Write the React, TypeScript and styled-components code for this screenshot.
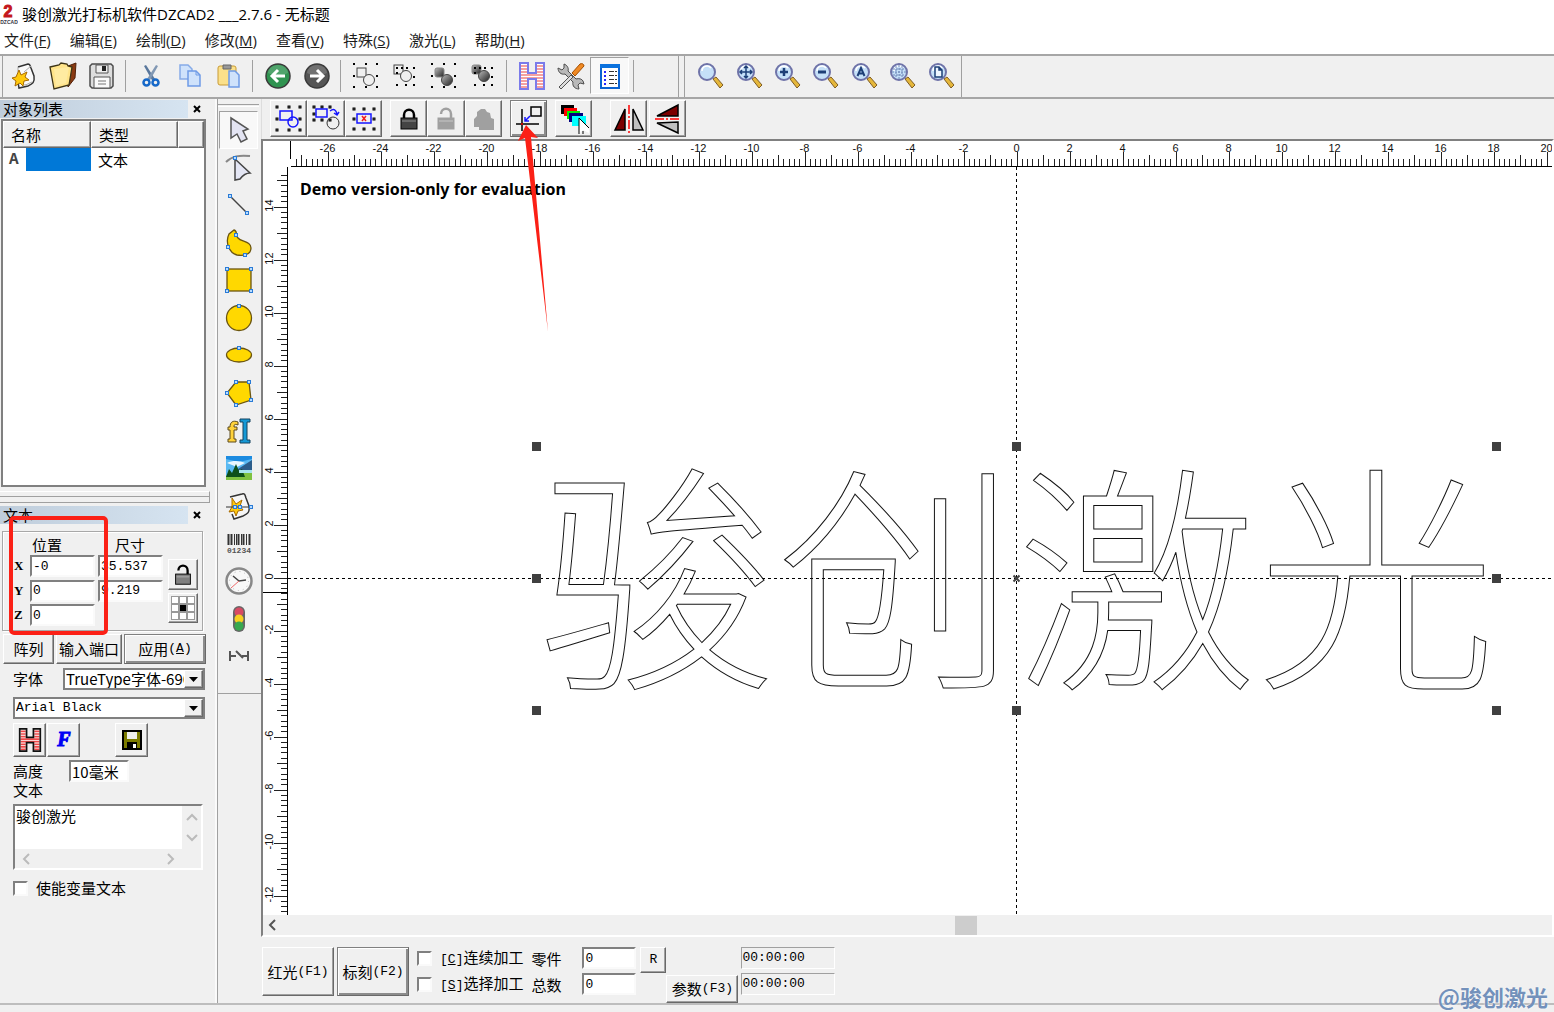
import React, { useEffect, useState } from "react";
import styled, { createGlobalStyle, css } from "styled-components";

const SANS = `"Open Sans", "Noto Sans CJK SC", sans-serif`;
const SONG = `"Noto Sans CJK SC", sans-serif`;
const MONO = `"Liberation Mono", "Noto Sans CJK SC", monospace`;

const Global = createGlobalStyle`
  *, *::before, *::after { box-sizing: border-box; }
  html, body, #root { height: 100%; }
  body { margin: 0; background: #f0f0f0; color: #000; font-family: ${SONG}; font-size: 15px; line-height: 20px; overflow: hidden; }
  button, input, select, textarea { font: inherit; color: inherit; margin: 0; padding: 0; border-radius: 0; }
  svg { display: block; flex: none; }
`;

const raised = css`
  background: #f0f0f0;
  border: 1px solid;
  border-color: #fff #696969 #696969 #fff;
  box-shadow: inset -1px -1px 0 #a0a0a0;
`;
const sunken = css`
  background: #fff;
  border: 2px solid;
  border-color: #808080 #fafafa #fafafa #808080;
`;

/* ---------- frame ---------- */
const Window = styled.div`
  position: relative;
  display: flex;
  flex-direction: column;
  height: 100%;
  background: #f0f0f0;
`;
const TitleBar = styled.header`
  display: flex;
  align-items: center;
  gap: 4px;
  height: 30px;
  background: #fff;
`;
const AppTitle = styled.h1`
  margin: 0;
  padding-bottom: 2px;
  font: 15px/28px ${SANS};
  white-space: pre;
`;
const MenuBar = styled.nav`
  display: flex;
  align-items: flex-start;
  gap: 19px;
  height: 24px;
  padding-left: 4px;
  background: #fff;
`;
const MenuItem = styled.button`
  height: 20px;
  border: 0;
  background: none;
  font: 15px/20px ${SANS};
  color: #1c1c1c;
  white-space: nowrap;
`;
const MainToolbar = styled.div`
  display: flex;
  height: 45px;
  border-top: 2px solid #a6a6a6;
  border-bottom: 2px solid #a6a6a6;
  background: #f0f0f0;
`;
const ToolGroup = styled.div<{ $width: number; $before: number; $pad: number }>`
  display: flex;
  align-items: center;
  width: ${(p) => p.$width}px;
  margin-left: ${(p) => p.$before}px;
  padding: 0 0 2px ${(p) => p.$pad}px;
  border-left: 1px solid #a0a0a0;
  border-right: 1px solid #a0a0a0;
`;
const FlatButton = styled.button<{ $pressed?: boolean }>`
  display: flex;
  align-items: center;
  justify-content: center;
  width: 39px;
  height: 37px;
  border: 1px solid transparent;
  background: none;
  ${(p) => p.$pressed && css`border-color: #a0a0a0 #fff #fff #a0a0a0; background: #f8f8f8;`}
`;
const Separator = styled.span`
  width: 1px;
  height: 32px;
  margin: 0 5px 0 4px;
  background: #a0a0a0;
`;
const Body = styled.div`
  display: flex;
  flex: 1;
  min-height: 0;
  border-bottom: 2px solid #bdbdbd;
`;
const StatusStrip = styled.div`
  height: 7px;
`;

/* ---------- left dock ---------- */
const Dock = styled.aside`
  display: flex;
  flex-direction: column;
  width: 217px;
  flex: none;
  border-right: 2px solid #fafafa;
`;
const Caption = styled.div`
  display: flex;
  align-items: center;
  height: 19px;
  padding-right: 9px;
`;
const CaptionTitle = styled.h2`
  flex: 1;
  height: 18px;
  margin: 0;
  padding-left: 3px;
  background: linear-gradient(90deg, #bfcddb, #d6e4f1);
  font: 15px/18px ${SONG};
`;
const CloseButton = styled.button`
  display: flex;
  align-items: center;
  justify-content: center;
  width: 18px;
  height: 18px;
  border: 0;
  background: none;
`;
const ListFrame = styled.div`
  height: 368px;
  margin: 1px 9px 0 1px;
  background: #fff;
  border: 2px solid #808080;
`;
const ObjectTable = styled.table`
  width: 100%;
  border-collapse: separate;
  border-spacing: 0;
  table-layout: fixed;
`;
const HeadCell = styled.th<{ $w?: number }>`
  ${raised}
  width: ${(p) => (p.$w ? `${p.$w}px` : "auto")};
  height: 27px;
  padding: 0 0 0 7px;
  font-weight: 400;
  text-align: left;
`;
const NameCell = styled.td`
  height: 23px;
  padding: 0;
`;
const NameInner = styled.div`
  display: flex;
  height: 23px;
  line-height: 20px;
  color: #444;
`;
const Glyph = styled.span`
  width: 23px;
  padding-left: 6px;
  font-weight: 700;
`;
const Selected = styled.span`
  flex: 1;
  background: #0078d7;
`;
const TypeCell = styled.td`
  padding: 0 0 0 7px;
`;
const Splitter = styled.div`
  height: 12px;
  margin: 4px 5px 2px 0;
  border-top: 1px solid #fff;
  border-right: 1px solid #a0a0a0;
`;
const SplitLine = styled.div`
  height: 7px;
  margin-top: 4px;
  border-top: 1px solid #a0a0a0;
  border-bottom: 1px solid #a0a0a0;
`;
const PropertyForm = styled.form`
  display: flex;
  flex-direction: column;
`;
const GeometryBox = styled.fieldset`
  display: grid;
  grid-template-columns: 13px 65px 65px 30px;
  grid-template-rows: 21px 24px 25px 24px;
  column-gap: 3px;
  align-items: center;
  height: 100px;
  margin: 7px 12px 0 2px;
  padding: 1px 0 0 11px;
  border: 1px solid #a8a8a8;
  box-shadow: inset 1px 1px 0 #fff, 1px 1px 0 #fff;
`;
const GeometryTitles = styled.div`
  grid-column: 1 / -1;
  display: flex;
  gap: 53px;
  padding: 2px 0 0 18px;
`;
const AxisLabel = styled.label`
  grid-column: 1;
  font: 700 13px/20px "Liberation Serif", serif;
`;
const Field = styled.input<{ $w?: number }>`
  ${sunken}
  width: ${(p) => (p.$w ? `${p.$w}px` : "100%")};
  height: 22px;
  padding-left: 1px;
  font: 13px/18px ${MONO};
`;
const HeightField = styled(Field)`
  margin-left: 26px;
  font: 15px/18px ${SONG};
`;
const SideButtons = styled.div`
  grid-column: 4;
  grid-row: 2 / 5;
  align-self: start;
  display: flex;
  flex-direction: column;
  gap: 3px;
  padding: 5px 0 0 2px;
`;
const RaisedButton = styled.button<{ $w: number; $h: number; $strong?: boolean }>`
  ${raised}
  display: flex;
  align-items: center;
  justify-content: center;
  width: ${(p) => p.$w}px;
  height: ${(p) => p.$h}px;
  flex: none;
  white-space: nowrap;
  ${(p) => p.$strong && css`border-color: #808080 #696969 #696969 #808080; box-shadow: inset 1px 1px 0 #fff, inset -2px -2px 0 #8c8c8c;`}
`;
const Half = styled.span`
  font: 13px/20px ${MONO};
`;
const Row = styled.div<{ $gap?: number; $top?: number; $left?: number }>`
  display: flex;
  align-items: center;
  gap: ${(p) => p.$gap ?? 0}px;
  margin-top: ${(p) => p.$top ?? 0}px;
  padding-left: ${(p) => p.$left ?? 13}px;
`;
const SelectBox = styled.div<{ $w: number }>`
  position: relative;
  width: ${(p) => p.$w}px;
  height: 22px;
  background: #fff;
  border: 2px solid #808080;
`;
const Select = styled.select<{ $mono?: boolean }>`
  display: block;
  appearance: none;
  width: 100%;
  height: 18px;
  padding: 0 19px 0 1px;
  border: 0;
  background: #fff;
  font: ${(p) => (p.$mono ? `13px/18px "Liberation Mono", monospace` : `15px/18px ${SONG}`)};
`;
const DropArrow = styled.span`
  ${raised}
  position: absolute;
  top: 0;
  right: 0;
  display: flex;
  align-items: center;
  justify-content: center;
  width: 19px;
  height: 18px;
  pointer-events: none;
`;
const Spacer = styled.span`
  width: 33px;
`;
const EditorFrame = styled.div`
  display: grid;
  grid-template: 43px 19px / 167px 20px;
  width: 190px;
  height: 66px;
  margin: 4px 0 0 13px;
  border: 2px solid;
  border-color: #808080 #fff #fff #808080;
`;
const Editor = styled.textarea`
  border: 0;
  padding: 0 0 0 1px;
  resize: none;
  outline: 0;
  overflow: hidden;
  background: #fff;
  font: 15px/20px ${SONG};
`;
const ScrollEnds = styled.div<{ $vertical?: boolean }>`
  display: flex;
  flex-direction: ${(p) => (p.$vertical ? "column" : "row")};
  justify-content: space-between;
  align-items: center;
  padding: ${(p) => (p.$vertical ? "5px 0" : "0 5px")};
`;
const BareButton = styled.button`
  display: flex;
  border: 0;
  background: none;
`;
const CheckLabel = styled.label`
  display: flex;
  align-items: center;
  gap: 8px;
  height: 22px;
  white-space: nowrap;
`;
const Check = styled.input`
  ${sunken}
  appearance: none;
  width: 15px;
  height: 15px;
  flex: none;
  &:checked { background: #333; }
`;

/* ---------- drawing tools ---------- */
const Palette = styled.div`
  display: flex;
  flex-direction: column;
  width: 44px;
  flex: none;
  border-left: 1px solid #a0a0a0;
`;
const PaletteTools = styled.div`
  display: flex;
  flex-direction: column;
  align-items: center;
  height: 595px;
  padding: 12px 2px 18px 0;
  border-bottom: 1px solid #a0a0a0;
`;
const Grip = styled.div`
  flex: none;
  width: 100%;
  height: 3px;
  border-top: 1px solid #a0a0a0;
  border-bottom: 1px solid #fff;
  margin: -7px 0 4px;
`;
const PaletteButton = styled(FlatButton)`
  flex: 1;
  height: auto;
`;

/* ---------- work area ---------- */
const Work = styled.main`
  display: flex;
  flex: 1;
  flex-direction: column;
  min-width: 0;
`;
const ObjectToolbar = styled.div`
  display: flex;
  gap: 8px;
  height: 40px;
  padding: 1px 0 0 8px;
  border-left: 1px solid #ddd;
`;
const ButtonRun = styled.div<{ $lead?: number; $gap?: number }>`
  display: flex;
  gap: ${(p) => p.$gap ?? 0}px;
  margin-left: ${(p) => p.$lead ?? 0}px;
`;
const CanvasFrame = styled.div`
  display: grid;
  grid-template: 26px 1fr 20px / 25px 1fr;
  flex: 1;
  min-height: 0;
  border: 2px solid;
  border-color: #808080 #fff #fff #808080;
  background: #fff;
`;
const Plane = styled.svg<{ $span?: number }>`
  grid-column: span ${(p) => p.$span ?? 1};
  width: 100%;
  height: 100%;
  min-width: 0;
  min-height: 0;
  overflow: hidden;
`;
const HScroll = styled.div`
  grid-column: 1 / 3;
  display: flex;
  align-items: center;
  padding-left: 4px;
  background: #f0f0f0;
`;
const Track = styled.div`
  flex: 1;
  height: 19px;
  padding-left: calc(53% - 5px);
`;
const Thumb = styled.div`
  width: 22px;
  height: 19px;
  background: #cdcdcd;
`;
const MarkPanel = styled.div`
  display: flex;
  height: 66px;
  padding: 10px 0 0 1px;
`;
const Column = styled.div<{ $left: number; $top?: number }>`
  display: flex;
  flex-direction: column;
  gap: 4px;
  margin-left: ${(p) => p.$left}px;
  padding-top: ${(p) => p.$top ?? 0}px;
`;
const Caps = styled.label`
  height: 22px;
  line-height: 24px;
`;
const TimeBox = styled.output`
  width: 94px;
  height: 22px;
  border: 1px solid;
  border-color: #a0a0a0 #fff #fff #a0a0a0;
  font: 13px/20px ${MONO};
`;

/* ---------- overlays ---------- */
const HighlightBox = styled.div`
  position: absolute;
  left: 9px;
  top: 516px;
  width: 99px;
  height: 119px;
  border: 4px solid #fb2016;
  border-radius: 5px;
  pointer-events: none;
`;
const ArrowMark = styled.svg`
  position: absolute;
  left: 514px;
  top: 122px;
  pointer-events: none;
`;
const Watermark = styled.div`
  position: absolute;
  right: 6px;
  bottom: 2px;
  color: #7391bb;
  font: 700 22px/28px ${SONG};
  text-shadow: 0 0 2px #fff;
`;

/* ---------- icons ---------- */
type IcoProps = { s?: number; children: React.ReactNode };
const Ico = ({ s = 28, children }: IcoProps) => (
  <svg width={s} height={s} viewBox={`0 0 ${s} ${s}`} fill="none" aria-hidden="true">{children}</svg>
);

const NewIcon = () => (
  <Ico>
    <path d="M8 5l10-3c2 0 2 1 3 4l3 8c1 7-2 8-6 10l-9 2-1-6" fill="#fafafa" stroke="#333" strokeWidth="1.500" />
    <path d="M8 5v5M14 10l7-6M14 23c3 0 5-2 8-3" stroke="#aaa" />
    <path d="M9 8l2 5 6-3-2 5 4 3-5 1-1 5-3-3-5 3 1-5-4-3 4-1z" fill="#ffc90e" stroke="#a86a00" />
  </Ico>
);
const FolderIcon = () => (
  <Ico><path d="M19 4l8-3-1 15-7 9z" fill="#8a3a12" stroke="#512008" /><path d="M1 5l9-2 2-2 6 1 1 2 4 1-3 18-15 4z" fill="#ffe48a" stroke="#3d3416" strokeWidth="1.300" /><path d="M5 7l15-2-3 16-10 3z" fill="#fff0b0" opacity=".6" /></Ico>
);
const DiskIcon = () => (
  <Ico><path d="M4 2h19l2 2v20l-2 2H4l-2-2V4z" fill="#dedede" stroke="#4c4c4c" strokeWidth="1.500" /><path d="M8 3h12v8H8z" fill="#eee" stroke="#555" /><path d="M14 4h4v5h-4z" fill="#222" /><path d="M6 15h16v11H6z" fill="#fafafa" stroke="#555" /><path d="M10 19h8M10 22h8" stroke="#777" /></Ico>
);
const CutIcon = () => (
  <Ico><path d="M7 4l2-1 9 14-2 3z" fill="#59779c" /><path d="M21 4l-2-1-9 14 2 3z" fill="#8198b4" /><circle cx="9.500" cy="20.500" r="3" stroke="#1769c9" strokeWidth="2.500" /><circle cx="18.500" cy="20.500" r="3" stroke="#1769c9" strokeWidth="2.500" /></Ico>
);
const CopyIcon = () => (
  <Ico><path d="M4 3h8l4 4v10H4z" fill="#cfe2fb" stroke="#86abe8" strokeWidth="1.500" /><path d="M12 9h8l4 4v11H12z" fill="#cfe2fb" stroke="#6f9be6" strokeWidth="1.500" /><path d="M20 9v4h4" stroke="#6f9be6" /></Ico>
);
const PasteIcon = () => (
  <Ico><rect x="3" y="4" width="18" height="19" rx="2" fill="#fbe08a" stroke="#c89b36" /><path d="M8 3h8v4H8z" fill="#999" stroke="#666" /><path d="M14 9h6l4 4v12H14z" fill="#cfe2fb" stroke="#6f9be6" strokeWidth="1.500" /></Ico>
);
const RoundArrow = ({ fill, flip }: { fill: string; flip?: boolean }) => (
  <Ico><circle cx="14" cy="14" r="12" fill={fill} stroke="#3a3a3a" strokeWidth="1.500" /><path d="M4 11a10 8 0 0 1 20 0c-6 3-14 3-20 0z" fill="#fff" opacity=".16" /><path d={flip ? "M7 14h13M14 8l6 6-6 6" : "M21 14H8M14 8l-6 6 6 6"} stroke="#fff" strokeWidth="3" /></Ico>
);
const dots = (pts: number[][], size = 3, hollow = false) =>
  pts.map(([x, y], i) => <rect key={i} x={x} y={y} width={size} height={size} fill={hollow ? "#777" : "#000"} stroke={hollow ? "#000" : "none"} />);
const ring8 = (a: number, b: number, c: number) => [[a, a], [b, a], [c, a], [a, b], [c, b], [a, c], [b, c], [c, c]];
const GroupIcon = ({ dark, tight }: { dark?: boolean; tight?: boolean }) => (
  <Ico>
    {dark && <defs><linearGradient id="orb" x2="1" y2="1"><stop stopColor="#bbb" /><stop offset="1" stopColor="#222" /></linearGradient></defs>}
    <rect x={tight ? 3 : 5} y={tight ? 3 : 6} width="9" height="9" rx={dark ? 2 : 0} fill={dark ? "url(#orb)" : "none"} stroke={dark ? "#888" : "#444"} />
    <circle cx={tight ? 15 : 17} cy={tight ? 14 : 18} r="5.500" fill={dark ? "url(#orb)" : "#f0f0f0"} stroke="#444" />
    {tight ? dots([[5, 5], [10, 5], [5, 10], [22, 5], [22, 14], [5, 22], [14, 22], [22, 22], [15, 5]], 2) : dots(ring8(1, 13, 24), 2)}
  </Ico>
);
const HatchIcon = ({ s = 28, edge = "#7b7bea", fill = "#f5a0a0" }: { s?: number; edge?: string; fill?: string }) => (
  <svg width={s} height={s} viewBox="0 0 28 28" fill="none"><path d="M2 1h8v10h8V1h8v26h-8V17h-8v10H2z" fill="#fff" /><path d="M3 4h6M3 7h6M3 10h6M3 13h22M3 16h22M3 19h6M3 22h6M3 25h6M19 4h6M19 7h6M19 10h6M19 19h6M19 22h6M19 25h6" stroke={fill} strokeWidth="2" /><path d="M2 1h8v10h8V1h8v26h-8V17h-8v10H2z" stroke={edge} strokeWidth="2" /></svg>
);
const ToolsIcon = () => (
  <Ico>
    <path d="M7 2c3 1 5 4 4 7l8 8c3-1 6 0 7 2l1 3-4-1-2 2 1 4c-4 0-7-3-6-7l-8-8C4 13 1 10 1 6l4 2 2-2z" fill="#b9b9b9" stroke="#4d4d4d" />
    <path d="M2 25l12-12 2 2L4 27z" fill="#ddd" stroke="#555" />
    <path d="M15 11l8-9c2-1 4 0 4 2l-9 10z" fill="#f08a24" stroke="#a34e00" />
  </Ico>
);
const ListIcon = () => (
  <Ico><rect x="5" y="3" width="18" height="23" fill="#fff" stroke="#0b63d1" strokeWidth="2" /><path d="M4 2h20v4H4z" fill="#0b72de" /><path d="M8 10h3M8 14h3M8 18h3M8 22h3" stroke="#2626ff" strokeWidth="2" strokeDasharray="2 1" /><path d="M13 9.500h8M13 13.500h8M13 17.500h8M13 21.500h8" stroke="#333" strokeDasharray="5 1" /></Ico>
);
const Mag = ({ children }: { children?: React.ReactNode }) => (
  <Ico><path d="M16 17l3-2 7 8-3 3z" fill="#e5b73a" stroke="#7e5c24" /><circle cx="10" cy="10" r="8" fill="#c5e0f8" stroke="#6f73a8" strokeWidth="2" /><path d="M5 9a5 5 0 0 1 9-3" stroke="#fff" strokeWidth="1.500" /><g stroke="#1d3f77" strokeWidth="2">{children}</g></Ico>
);
const Padlock = ({ fill = "#444", edge = "#000", open, s = 26, multi }: { fill?: string; edge?: string; open?: boolean; s?: number; multi?: boolean }) => (
  <svg width={s} height={s} viewBox="0 0 26 26" fill="none">
    {multi ? <path d="M3 13l3-3V6l4-3h4l2 3 3 1 1 5 3 1v11H8v-3H3z" fill="#a0a0a0" /> : <>
      <path d={open ? "M8 8c0-7 10-7 10 0v5" : "M8 13V9c0-7 10-7 10 0v4"} stroke={edge} strokeWidth="2.500" />
      <rect x="5" y="12" width="16" height="11" fill={fill} stroke={edge} /><path d="M6 15h14" stroke="#fff" opacity=".4" /></>}
  </svg>
);

const Nd = ({ p }: { p: number[][] }) => <>{p.map(([x, y], i) => <rect key={i} x={x - 1.5} y={y - 1.5} width="3" height="3" fill="#b8dcff" stroke="#2a7bd6" />)}</>;
const CursorIcon = () => (<Ico><path d="M6 2l17 11-5 2 4 8-6 3-4-8-6 4z" fill="#e3e4f2" stroke="#555" strokeWidth="1.500" /></Ico>);
const NodeIcon = () => (<Ico><path d="M1 9C7 3 14 2 25 3" stroke="#888" strokeWidth="2" /><path d="M10 6l15 14c-4 0-7 2-10 6l-5 1z" fill="#e4e6f4" stroke="#444" strokeWidth="1.500" /><Nd p={[[10, 5]]} /></Ico>);
const LineIcon = () => (<Ico><path d="M6 6l16 16" stroke="#444" strokeWidth="1.500" /><Nd p={[[5, 5], [22, 22]]} /></Ico>);
const gold = { fill: "#ffd800", stroke: "#6b5510", strokeWidth: 1.3 };
const BlobIcon = () => (<Ico><path d="M9 1c4 1 1 5 4 8 3 4 13 3 13 10 0 7-8 8-14 7C4 24 0 13 4 5z" {...gold} /><Nd p={[[11, 6], [3, 18], [20, 26]]} /></Ico>);
const RectIcon = () => (<Ico><rect x="2" y="3" width="24" height="22" {...gold} /><Nd p={[[2, 3], [26, 3], [2, 25], [26, 25]]} /></Ico>);
const CircleIcon = () => (<Ico><circle cx="14" cy="14" r="12.500" {...gold} /><Nd p={[[14, 2]]} /></Ico>);
const EllipseIcon = () => (<Ico><ellipse cx="14" cy="14" rx="12.500" ry="7" {...gold} /><Nd p={[[14, 7]]} /></Ico>);
const PolyIcon = () => (<Ico><path d="M11 3h13l2 18-15 5L2 14z" {...gold} /><Nd p={[[11, 3], [24, 3], [26, 21], [11, 26], [2, 14]]} /></Ico>);
const TextIcon = () => (<Ico><path d="M13 5c-5-2-8 0-8 5H3v3h2v9H3v3h8v-3H9v-9h3v-3H9c0-3 1-3 4-2z" fill="#ffd23a" stroke="#5d4b1c" /><path d="M15 2h10v3h-3v18h3v3H15v-3h3V5h-3z" fill="#1599d6" stroke="#15435f" /></Ico>);
const PictureIcon = () => (<Ico><path d="M1 2h26v24H1z" fill="#59b9f2" /><path d="M1 2h26v3L14 8 1 5z" fill="#1c8be0" /><path d="M2 9c6-3 14-2 18 0l-8 4z" fill="#e9f7ff" /><path d="M13 15L27 6v12H13z" fill="#2c5d8a" /><path d="M1 22l14-5 12 1v8H1z" fill="#7fc241" /><path d="M1 23l3-8 3 4 4-9 3 7 3-2 3 8z" fill="#0d4f1a" /><path d="M14 16h13v3H14z" fill="#a7e4ee" /></Ico>);
const VectorIcon = () => (<Ico><path d="M5 5l12-3c3-1 3 1 4 4l3 8c1 7-2 8-6 10l-9 3-2-5" fill="#f6f6f6" stroke="#333" strokeWidth="1.500" /><path d="M7 6l4 6 6-4-2 6 3 4-5 1-2 5-2-5-5 1 3-5z" fill="#ffc90e" stroke="#a86a00" /><path d="M1 15h25" stroke="#333" /><Nd p={[[10, 15], [15, 15], [26, 15]]} /></Ico>);
const BarcodeIcon = () => (
  <Ico><path d="M3.500 5v11M6.500 5v11M13.500 5v11M18.500 5v11M24.500 5v11" stroke="#333" strokeWidth="2" /><path d="M9.500 5v11M11.500 5v11M16.500 5v11M21.500 5v11" stroke="#333" /><text x="14" y="24" textAnchor="middle" fontFamily="Liberation Mono" fontSize="8" fontWeight="700" fill="#555">01234</text></Ico>
);
const ClockIcon = () => (<Ico><circle cx="14" cy="14" r="12.500" fill="#f8f8f8" stroke="#888" strokeWidth="2.500" /><circle cx="14" cy="14" r="9.500" stroke="#bbb" strokeDasharray="1 4" /><path d="M8 9l6 5 7-1" stroke="#444" strokeWidth="1.500" /><path d="M14 14l-8 7" stroke="#ef6a6a" /></Ico>);
const TrafficIcon = () => (<Ico><rect x="8" y="1" width="12" height="26" rx="6" fill="#666" /><circle cx="14" cy="7" r="4.500" fill="#d84a63" /><circle cx="14" cy="14" r="4.500" fill="#f7d020" /><circle cx="14" cy="21" r="4.500" fill="#37a84f" /></Ico>);
const LinkIcon = () => (<Ico><path d="M5 9v10M23 9v10" stroke="#555" strokeWidth="2" /><path d="M5 14h6M17 14h6M11 9l7 7" stroke="#555" strokeWidth="2" /></Ico>);

const SelIcon = ({ kind }: { kind: "all" | "swap" | "del" }) => (
  <Ico>
    {kind === "all" && <>{dots(ring8(1, 13, 24), 2, true)}<rect x="5" y="6" width="12" height="9" stroke="#1515ff" strokeWidth="1.500" /><circle cx="18" cy="17" r="5" stroke="#1515ff" strokeWidth="1.500" /></>}
    {kind === "swap" && <>{dots([[1, 1], [9, 1], [17, 1], [1, 8], [1, 14], [9, 14], [17, 14]], 2, true)}<rect x="4" y="4" width="11" height="8" stroke="#1515ff" strokeWidth="1.500" /><circle cx="21" cy="18" r="6" stroke="#333" /><path d="M18 6c4-3 6-1 7 3m-3-1l3 2 2-3" stroke="#1515ff" strokeWidth="1.500" /></>}
    {kind === "del" && <>{dots(ring8(3, 13, 23), 2, true)}<rect x="7" y="9" width="14" height="9" stroke="#1515ff" strokeWidth="1.500" /><path d="M12 11l4 5M16 11l-4 5" stroke="#f21d1d" strokeWidth="1.500" /></>}
  </Ico>
);
const OriginIcon = () => (<Ico><path d="M7 4v22M1 19h23" stroke="#000" strokeWidth="1.500" /><rect x="16" y="2" width="10" height="9" stroke="#000" strokeWidth="1.500" /><path d="M15 11l-5 5m0-4v4h4" stroke="#1515ff" strokeWidth="1.500" /><circle cx="7" cy="19" r="1" fill="red" /></Ico>);
const LayersIcon = () => (<Ico s={32}><path d="M3 2h13v9H3z" fill="#000" /><path d="M6 5h13v8H6z" fill="red" /><path d="M9 8h13v8H9z" fill="#00f000" /><path d="M11 10h14v9H11z" fill="#000080" /><path d="M14 13h14v10H14z" fill="#0ff" /><path d="M21 15v16l4-4 6 3V25z" fill="#fff" /><path d="M21 31V15l10 10M25 31v-3" stroke="#000" /></Ico>);
const MirrorH = () => (<Ico s={32}><path d="M12 6v21H2z" fill="#7c0000" stroke="#000" strokeWidth="1.500" /><path d="M20 6v21h10z" fill="#c0c0c0" stroke="#000" strokeWidth="1.500" /><path d="M16 2v28" stroke="red" strokeDasharray="9 2 2 2" strokeWidth="1.500" /></Ico>);
const MirrorV = () => (<Ico s={32}><path d="M26 2v11H5z" fill="#7c0000" stroke="#000" strokeWidth="1.500" /><path d="M26 19v11L5 20z" fill="#c0c0c0" stroke="#000" strokeWidth="1.500" /><path d="M3 16h26" stroke="red" strokeDasharray="9 2 2 2" strokeWidth="1.500" /></Ico>);
const Chevron = ({ d, c = "#bbb" }: { d: string; c?: string }) => (
  <svg width="12" height="12" viewBox="0 0 12 12" fill="none"><path d={d} stroke={c} strokeWidth="2" /></svg>
);
const CloseMark = () => (<svg width="8" height="8" viewBox="0 0 8 8"><path d="M1 1l6 6M7 1L1 7" stroke="#000" strokeWidth="2" /></svg>);
const LogoIcon = () => (
  <svg width="18" height="28" viewBox="0 0 18 28"><text x="8" y="16" textAnchor="middle" fontFamily="Liberation Sans" fontWeight="700" fontSize="16" fill="#c4161c" stroke="#c4161c">2</text><text x="9" y="23" textAnchor="middle" fontFamily="Liberation Sans" fontWeight="700" fontSize="5" fill="#334">DZCAD</text></svg>
);
const Drop = () => (<svg width="9" height="5" viewBox="0 0 9 5"><path d="M0 0h9L4.500 5z" fill="#000" /></svg>);
const AnchorGrid = () => (<svg width="24" height="24" viewBox="0 0 24 24"><path d="M0 0h24v24H0z" fill="#999" />{[0, 1, 2].map((r) => [0, 1, 2].map((c) => <rect key={`${r}${c}`} x={1 + c * 8} y={1 + r * 8} width="6" height="6" fill={r === 1 && c === 1 ? "#000" : "#fff"} />))}</svg>);

/* ---------- ruler maths ---------- */
const UNIT = 26.5;
const ORIGIN = { x: 728.5, y: 411.5 };
const steps = (from: number, to: number) => Array.from({ length: Math.max(0, to - from + 1) }, (_, i) => from + i);
const tickLength = (k: number) => (k % 10 === 0 ? 14 : k % 5 === 0 ? 11 : 7);

function useWindowSize() {
  const [size, setSize] = useState({ w: window.innerWidth, h: window.innerHeight });
  useEffect(() => {
    const update = () => setSize({ w: window.innerWidth, h: window.innerHeight });
    window.addEventListener("resize", update);
    return () => window.removeEventListener("resize", update);
  }, []);
  return size;
}

const HorizontalRuler = ({ length }: { length: number }) => {
  const origin = 25 + ORIGIN.x;
  const right = length - origin;
  return (
    <Plane $span={2}>
      <path d="M27.500 0v18" stroke="#000" />
      <path d={`M28 25.5H${length}`} stroke="#000" />
      {steps(-136, Math.floor((right * 5) / UNIT)).map((k) => {
        const x = Math.round(origin + (k * UNIT) / 5) + 0.5;
        return <path key={k} d={`M${x} 25v-${tickLength(k)}`} stroke="#222" />;
      })}
      {steps(-13, Math.floor((right - 5) / (2 * UNIT))).map((n) => (
        <text key={n} x={origin + n * 2 * UNIT} y="11" textAnchor="middle" fontFamily="Liberation Sans" fontSize="11" fill="#111">{n * 2}</text>
      ))}
    </Plane>
  );
};
const VerticalRuler = ({ length }: { length: number }) => {
  const below = length - ORIGIN.y;
  return (
    <Plane>
      <path d={`M24.5 0V${length}`} stroke="#000" />
      <path d="M0 425.500h25" stroke="#000" />
      {steps(-Math.floor((below * 5) / UNIT), 76).map((k) => {
        const y = Math.round(ORIGIN.y - (k * UNIT) / 5) - 0.5;
        return <path key={k} d={`M24 ${y}h-${tickLength(k) - 1}`} stroke="#222" />;
      })}
      {steps(-Math.floor((below - 10) / (2 * UNIT)), 7).map((n) => (
        <text key={n} transform={`translate(10 ${ORIGIN.y - n * 2 * UNIT - 2}) rotate(-90)`} textAnchor="middle" fontFamily="Liberation Sans" fontSize="11" fill="#111">{n * 2}</text>
      ))}
    </Plane>
  );
};
const Drawing = ({ label }: { label: string }) => (
  <Plane>
    <text x="12" y="28" fontFamily="Noto Sans" fontWeight="700" fontSize="16" fill="#000">Demo version-only for evaluation</text>
    <path d={`M0 ${ORIGIN.y}H4000M${ORIGIN.x} 0V3000`} stroke="#000" strokeDasharray="3 3" />
    <text x={ORIGIN.x - 480} y={ORIGIN.y + 92} fontFamily="Noto Sans CJK SC" fontWeight="300" fontSize="240" fill="none" stroke="#111" strokeWidth="1">{label}</text>
    {[-480, 0, 480].map((dx) => [-132, 0, 132].map((dy) =>
      dx === 0 && dy === 0
        ? <path key="c" d={`M${ORIGIN.x - 3} ${ORIGIN.y - 3}l6 6m0-6l-6 6`} stroke="#444" strokeWidth="2" />
        : <rect key={`${dx},${dy}`} x={ORIGIN.x + dx - 4.5} y={ORIGIN.y + dy - 4.5} width="9" height="9" fill="#404040" />
    ))}
  </Plane>
);

/* ---------- data ---------- */
const MENUS = [["文件", "F"], ["编辑", "E"], ["绘制", "D"], ["修改", "M"], ["查看", "V"], ["特殊", "S"], ["激光", "L"], ["帮助", "H"]];

const MAIN_TOOLS: ([string, React.ReactNode, boolean?] | null)[] = [
  ["新建", <NewIcon />], ["打开", <FolderIcon />], ["保存", <DiskIcon />], null,
  ["剪切", <CutIcon />], ["复制", <CopyIcon />], ["粘贴", <PasteIcon />], null,
  ["撤销", <RoundArrow fill="#2f9350" />], ["恢复", <RoundArrow fill="#555" flip />], null,
  ["组合", <GroupIcon />], ["分离组合", <GroupIcon tight />], ["群组", <GroupIcon dark />], ["分离群组", <GroupIcon dark tight />], null,
  ["填充", <HatchIcon />], ["参数设置", <ToolsIcon />], ["对象列表", <ListIcon />, true], null,
];
const ZOOM_TOOLS: [string, React.ReactNode][] = [
  ["缩放", <Mag />],
  ["平移", <Mag><path d="M10 4v12M4 10h12M8 6l2-2 2 2M8 14l2 2 2-2M6 8l-2 2 2 2M14 8l2 2-2 2" strokeWidth="1.500" /></Mag>],
  ["放大", <Mag><path d="M10 6v8M6 10h8" strokeWidth="2.500" /></Mag>],
  ["缩小", <Mag><path d="M6 10h8" strokeWidth="3" /></Mag>],
  ["全部", <Mag><path d="M6.500 14L10 6l3.500 8M8 11.500h4" /></Mag>],
  ["网格", <Mag><path d="M7 4v12M10 3v14M13 4v12M4 7h12M3 10h14M4 13h12" strokeWidth="1" strokeDasharray="2 1" stroke="#6f87b8" /></Mag>],
  ["页面", <Mag><path d="M7 5h4l3 3v7H7zM11 5v3h3" fill="#eef6ff" strokeWidth="1.500" /></Mag>],
];
const DRAW_TOOLS: [string, React.ReactNode][] = [
  ["选择", <CursorIcon />], ["节点", <NodeIcon />], ["直线", <LineIcon />], ["曲线", <BlobIcon />], ["矩形", <RectIcon />],
  ["圆", <CircleIcon />], ["椭圆", <EllipseIcon />], ["多边形", <PolyIcon />], ["文字", <TextIcon />], ["位图", <PictureIcon />],
  ["矢量文件", <VectorIcon />], ["条码", <BarcodeIcon />], ["延时器", <ClockIcon />], ["输入输出", <TrafficIcon />], ["开关", <LinkIcon />],
];

export default function App() {
  const [text, setText] = useState("骏创激光");
  const [tool, setTool] = useState(0);
  const { w, h } = useWindowSize();

  return (
    <Window>
      <Global />
      <TitleBar>
        <LogoIcon />
        <AppTitle>骏创激光打标机软件DZCAD2 ___2.7.6 - 无标题</AppTitle>
      </TitleBar>
      <MenuBar>
        {MENUS.map(([name, key]) => <MenuItem key={key}>{name}(<u>{key}</u>)</MenuItem>)}
      </MenuBar>
      <MainToolbar>
        <ToolGroup $width={677} $before={2} $pad={1}>
          {MAIN_TOOLS.map((t, i) => t
            ? <FlatButton key={i} aria-label={t[0]} $pressed={t[2]}>{t[1]}</FlatButton>
            : <Separator key={i} />)}
        </ToolGroup>
        <ToolGroup $width={278} $before={5} $pad={7}>
          {ZOOM_TOOLS.map(([name, icon]) => <FlatButton key={name} aria-label={name}>{icon}</FlatButton>)}
        </ToolGroup>
      </MainToolbar>

      <Body>
        <Dock>
          <Caption>
            <CaptionTitle>对象列表</CaptionTitle>
            <CloseButton aria-label="关闭"><CloseMark /></CloseButton>
          </Caption>
          <ListFrame>
            <ObjectTable>
              <thead><tr><HeadCell $w={88}>名称</HeadCell><HeadCell $w={87}>类型</HeadCell><HeadCell /></tr></thead>
              <tbody><tr><NameCell><NameInner><Glyph>A</Glyph><Selected /></NameInner></NameCell><TypeCell>文本</TypeCell><td /></tr></tbody>
            </ObjectTable>
          </ListFrame>
          <Splitter><SplitLine /></Splitter>
          <Caption>
            <CaptionTitle>文本</CaptionTitle>
            <CloseButton aria-label="关闭"><CloseMark /></CloseButton>
          </Caption>
          <PropertyForm onSubmit={(e) => e.preventDefault()}>
            <GeometryBox>
              <GeometryTitles><span>位置</span><span>尺寸</span></GeometryTitles>
              <AxisLabel htmlFor="x">X</AxisLabel>
              <Field id="x" defaultValue="-0" />
              <Field aria-label="宽度" defaultValue="35.537" />
              <SideButtons>
                <RaisedButton type="button" $w={30} $h={31} aria-label="锁定比例"><Padlock s={24} fill="#808080" open /></RaisedButton>
                <RaisedButton type="button" $w={30} $h={30} aria-label="基准点"><AnchorGrid /></RaisedButton>
              </SideButtons>
              <AxisLabel htmlFor="y">Y</AxisLabel>
              <Field id="y" defaultValue="0" />
              <Field aria-label="高度" defaultValue="9.219" />
              <AxisLabel htmlFor="z">Z</AxisLabel>
              <Field id="z" defaultValue="0" />
            </GeometryBox>
            <Row $top={3} $left={3} $gap={2}>
              <RaisedButton type="button" $w={51} $h={30}>阵列</RaisedButton>
              <RaisedButton type="button" $w={66} $h={30}>输入端口</RaisedButton>
              <RaisedButton type="submit" $w={82} $h={30} $strong>应用<Half>(<u>A</u>)</Half></RaisedButton>
            </Row>
            <Row $top={4} $gap={20}>
              <label htmlFor="kind">字体</label>
              <SelectBox $w={142}><Select id="kind"><option>TrueType字体-696</option></Select><DropArrow><Drop /></DropArrow></SelectBox>
            </Row>
            <Row $top={7}>
              <SelectBox $w={192}><Select $mono aria-label="字体名称"><option>Arial Black</option></Select><DropArrow><Drop /></DropArrow></SelectBox>
            </Row>
            <Row $top={4} $gap={1}>
              <RaisedButton type="button" $w={33} $h={34} aria-label="填充"><HatchIcon s={24} edge="#111" fill="#f04848" /></RaisedButton>
              <RaisedButton type="button" $w={33} $h={34} aria-label="字体设置">
                <svg width="28" height="30" viewBox="0 0 28 30"><text x="14" y="21" textAnchor="middle" fontFamily="Liberation Serif" fontStyle="italic" fontWeight="700" fontSize="20" fill="#0000f5" stroke="#0000f5">F</text></svg>
              </RaisedButton>
              <Spacer />
              <RaisedButton type="button" $w={33} $h={34} aria-label="保存">
                <svg width="20" height="20" viewBox="0 0 20 20"><path d="M1 1h18v18H1z" fill="#7b7b00" stroke="#000" strokeWidth="2" /><path d="M5 2h10v7H5z" fill="#eee" /><path d="M5 12h10v7H5z" fill="#000" /><path d="M11 14h3v4h-3z" fill="#fff" /></svg>
              </RaisedButton>
            </Row>
            <Row $top={3}>
              <label htmlFor="size">高度</label>
              <HeightField id="size" $w={60} defaultValue="10毫米" />
            </Row>
            <Row $top={-2}><label htmlFor="content">文本</label></Row>
            <EditorFrame>
              <Editor id="content" value={text} onChange={(e) => setText(e.target.value)} />
              <ScrollEnds $vertical>
                <BareButton type="button" aria-label="上"><Chevron d="M1 9l5-5 5 5" /></BareButton>
                <BareButton type="button" aria-label="下"><Chevron d="M1 3l5 5 5-5" /></BareButton>
              </ScrollEnds>
              <ScrollEnds>
                <BareButton type="button" aria-label="左"><Chevron d="M9 1L4 6l5 5" /></BareButton>
                <BareButton type="button" aria-label="右"><Chevron d="M3 1l5 5-5 5" /></BareButton>
              </ScrollEnds>
            </EditorFrame>
            <Row $top={7}><CheckLabel><Check type="checkbox" />使能变量文本</CheckLabel></Row>
          </PropertyForm>
        </Dock>

        <Palette>
          <PaletteTools>
            <Grip />
            {DRAW_TOOLS.map(([name, icon], i) => (
              <PaletteButton key={name} aria-label={name} $pressed={tool === i} onClick={() => setTool(i)}>{icon}</PaletteButton>
            ))}
          </PaletteTools>
        </Palette>

        <Work>
          <ObjectToolbar>
            <ButtonRun>
              <RaisedButton $w={37} $h={37} aria-label="全选"><SelIcon kind="all" /></RaisedButton>
              <RaisedButton $w={38} $h={37} aria-label="反选"><SelIcon kind="swap" /></RaisedButton>
              <RaisedButton $w={37} $h={37} aria-label="删除"><SelIcon kind="del" /></RaisedButton>
            </ButtonRun>
            <ButtonRun>
              <RaisedButton $w={37} $h={37} aria-label="锁定"><Padlock /></RaisedButton>
              <RaisedButton $w={38} $h={37} aria-label="解锁"><Padlock fill="#a0a0a0" edge="#a0a0a0" open /></RaisedButton>
              <RaisedButton $w={37} $h={37} aria-label="全部解锁"><Padlock multi /></RaisedButton>
            </ButtonRun>
            <ButtonRun><RaisedButton $w={37} $h={37} $strong aria-label="放置到原点"><OriginIcon /></RaisedButton></ButtonRun>
            <ButtonRun><RaisedButton $w={37} $h={37} aria-label="图层"><LayersIcon /></RaisedButton></ButtonRun>
            <ButtonRun $lead={10} $gap={2}>
              <RaisedButton $w={37} $h={37} aria-label="水平镜像"><MirrorH /></RaisedButton>
              <RaisedButton $w={37} $h={37} aria-label="垂直镜像"><MirrorV /></RaisedButton>
            </ButtonRun>
          </ObjectToolbar>

          <CanvasFrame>
            <HorizontalRuler length={w - 265} />
            <VerticalRuler length={h - 264} />
            <Drawing label={text} />
            <HScroll>
              <BareButton aria-label="向左滚动"><Chevron d="M8 1L3 6l5 5" c="#555" /></BareButton>
              <Track><Thumb /></Track>
            </HScroll>
          </CanvasFrame>

          <MarkPanel>
            <RaisedButton $w={72} $h={49}>红光<Half>(F1)</Half></RaisedButton>
            <Column $left={3}><RaisedButton $w={72} $h={49} $strong>标刻<Half>(F2)</Half></RaisedButton></Column>
            <Column $left={8}>
              <CheckLabel><Check type="checkbox" /><span><Half>[<u>C</u>]</Half>连续加工</span></CheckLabel>
              <CheckLabel><Check type="checkbox" /><span><Half>[<u>S</u>]</Half>选择加工</span></CheckLabel>
            </Column>
            <Column $left={8}>
              <Caps htmlFor="parts">零件</Caps>
              <Caps htmlFor="total">总数</Caps>
            </Column>
            <Column $left={21}>
              <Field id="parts" $w={54} defaultValue="0" />
              <Field id="total" $w={54} defaultValue="0" />
            </Column>
            <Column $left={4}><RaisedButton $w={26} $h={26}><Half>R</Half></RaisedButton></Column>
            <Column $left={0} $top={28}><RaisedButton $w={72} $h={28}>参数<Half>(F3)</Half></RaisedButton></Column>
            <Column $left={3}>
              <TimeBox>00:00:00</TimeBox>
              <TimeBox>00:00:00</TimeBox>
            </Column>
          </MarkPanel>
        </Work>
      </Body>
      <StatusStrip />

      <HighlightBox />
      <ArrowMark width="38" height="212" viewBox="0 0 38 212"><path d="M12 3L4 19l7-3 23 194L17 15l7 1z" fill="#fb2016" /></ArrowMark>
      <Watermark>@骏创激光</Watermark>
    </Window>
  );
}
